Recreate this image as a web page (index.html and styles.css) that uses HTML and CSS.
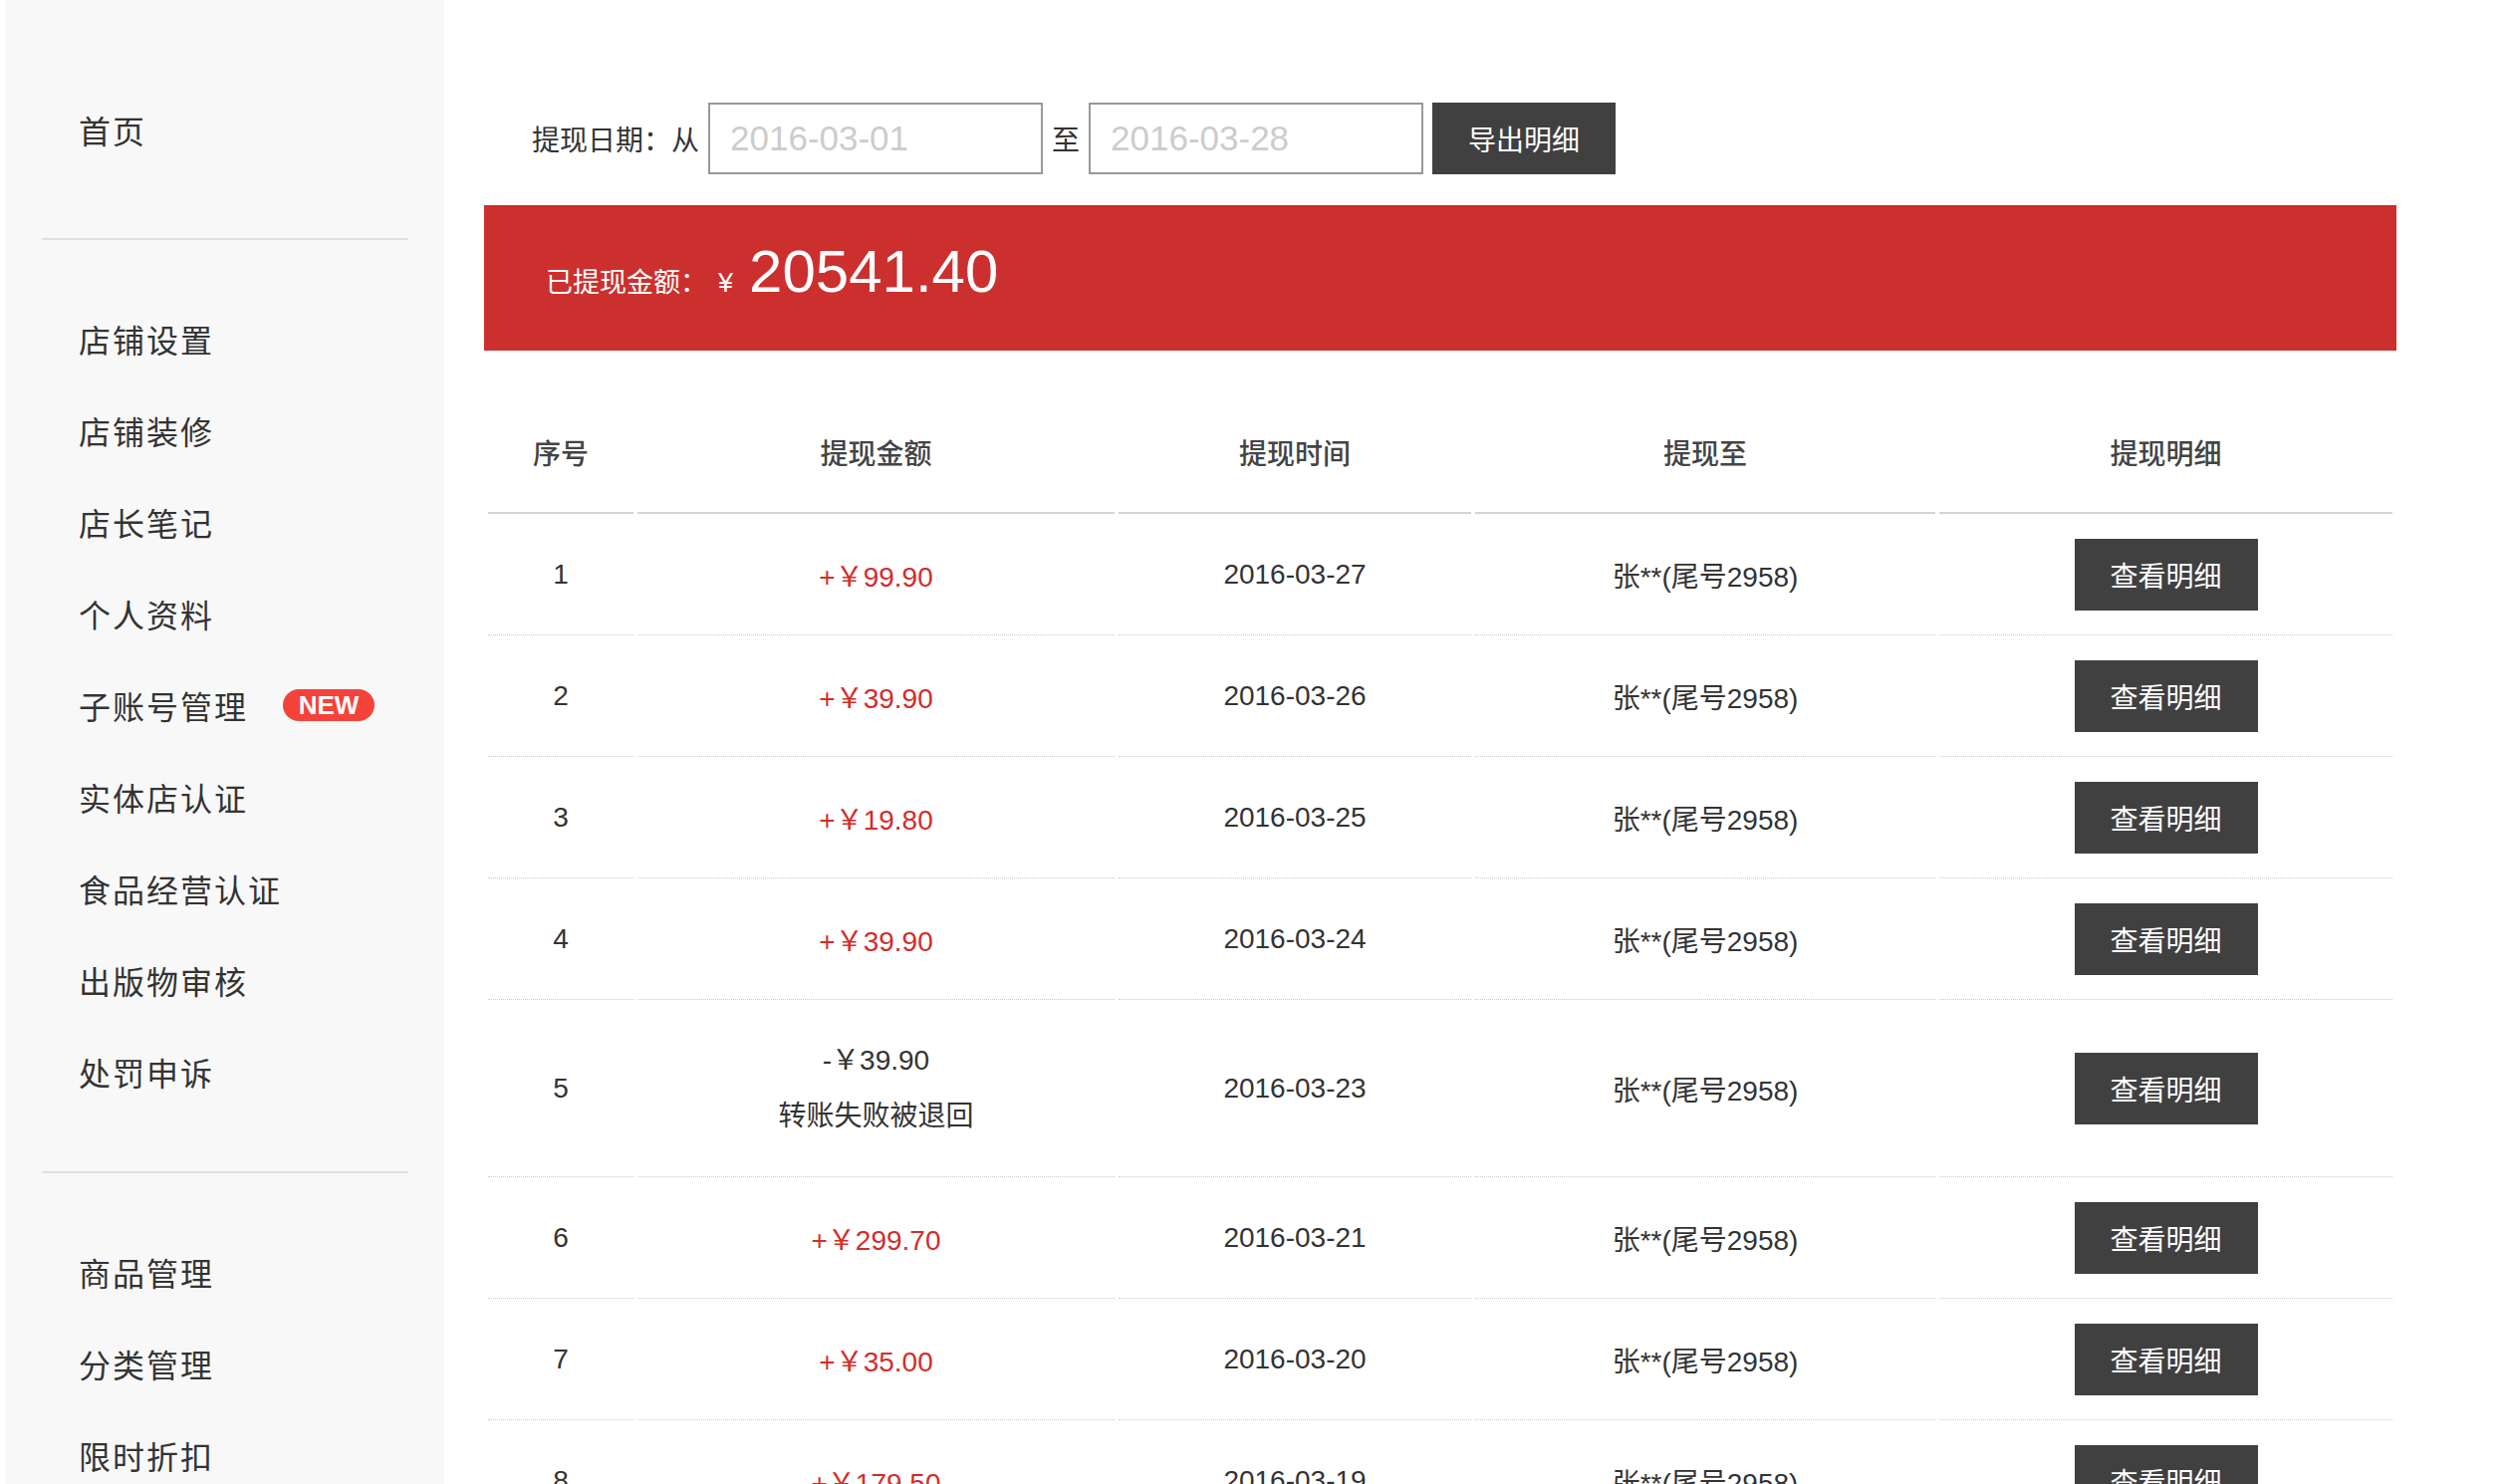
FILE: index.html
```html
<!DOCTYPE html>
<html lang="zh-CN">
<head>
<meta charset="utf-8">
<title>提现记录</title>
<link rel="stylesheet" href="styles.css">
</head>
<body>
<div class="page">
  <aside class="sidebar">
    <ul class="nav-group first">
      <li class="nav-item">首页</li>
    </ul>
    <div class="nav-divider"></div>
    <ul class="nav-group">
      <li class="nav-item">店铺设置</li>
      <li class="nav-item">店铺装修</li>
      <li class="nav-item">店长笔记</li>
      <li class="nav-item">个人资料</li>
      <li class="nav-item">子账号管理<span class="badge-new">NEW</span></li>
      <li class="nav-item">实体店认证</li>
      <li class="nav-item">食品经营认证</li>
      <li class="nav-item">出版物审核</li>
      <li class="nav-item">处罚申诉</li>
    </ul>
    <div class="nav-divider"></div>
    <ul class="nav-group">
      <li class="nav-item">商品管理</li>
      <li class="nav-item">分类管理</li>
      <li class="nav-item">限时折扣</li>
    </ul>
  </aside>

  <main class="main">
    <div class="filter">
      <span class="filter-label">提现日期：从</span>
      <input class="date-input" type="text" value="2016-03-01">
      <span class="filter-sep">至</span>
      <input class="date-input" type="text" value="2016-03-28">
      <button class="btn-dark btn-export">导出明细</button>
    </div>

    <div class="summary">
      <span class="summary-label">已提现金额：</span>
      <span class="summary-cur">¥</span>
      <span class="summary-total">20541.40</span>
    </div>

    <table class="records">
      <colgroup>
        <col class="c-no">
        <col class="c-amt">
        <col class="c-time">
        <col class="c-to">
        <col class="c-act">
      </colgroup>
      <thead>
        <tr>
          <th>序号</th>
          <th>提现金额</th>
          <th>提现时间</th>
          <th>提现至</th>
          <th>提现明细</th>
        </tr>
      </thead>
      <tbody>
        <tr>
          <td>1</td>
          <td class="amt-plus">+￥99.90</td>
          <td>2016-03-27</td>
          <td>张**(尾号2958)</td>
          <td><button class="btn-dark btn-view">查看明细</button></td>
        </tr>
        <tr>
          <td>2</td>
          <td class="amt-plus">+￥39.90</td>
          <td>2016-03-26</td>
          <td>张**(尾号2958)</td>
          <td><button class="btn-dark btn-view">查看明细</button></td>
        </tr>
        <tr>
          <td>3</td>
          <td class="amt-plus">+￥19.80</td>
          <td>2016-03-25</td>
          <td>张**(尾号2958)</td>
          <td><button class="btn-dark btn-view">查看明细</button></td>
        </tr>
        <tr>
          <td>4</td>
          <td class="amt-plus">+￥39.90</td>
          <td>2016-03-24</td>
          <td>张**(尾号2958)</td>
          <td><button class="btn-dark btn-view">查看明细</button></td>
        </tr>
        <tr>
          <td>5</td>
          <td><div class="amt-returned">-￥39.90<br>转账失败被退回</div></td>
          <td>2016-03-23</td>
          <td>张**(尾号2958)</td>
          <td><button class="btn-dark btn-view">查看明细</button></td>
        </tr>
        <tr>
          <td>6</td>
          <td class="amt-plus">+￥299.70</td>
          <td>2016-03-21</td>
          <td>张**(尾号2958)</td>
          <td><button class="btn-dark btn-view">查看明细</button></td>
        </tr>
        <tr>
          <td>7</td>
          <td class="amt-plus">+￥35.00</td>
          <td>2016-03-20</td>
          <td>张**(尾号2958)</td>
          <td><button class="btn-dark btn-view">查看明细</button></td>
        </tr>
        <tr>
          <td>8</td>
          <td class="amt-plus">+￥179.50</td>
          <td>2016-03-19</td>
          <td>张**(尾号2958)</td>
          <td><button class="btn-dark btn-view">查看明细</button></td>
        </tr>
      </tbody>
    </table>
  </main>
</div>
</body>
</html>
```

FILE: styles.css
```css
html, body {
  margin: 0;
  padding: 0;
  overflow: hidden;
  background: #ffffff;
}

body {
  font-family: "Liberation Sans", "Noto Sans CJK SC", sans-serif;
  color: #333333;
}

.page {
  display: flex;
  align-items: flex-start;
  height: 1490px;
}

/* ---------- Sidebar ---------- */
.sidebar {
  margin-left: 6px;
  width: 440px;
  min-height: 1560px;
  background: #f8f8f8;
  flex-shrink: 0;
}

.nav-group {
  list-style: none;
  margin: 0;
  padding: 53px 0 54px 0;
}

.nav-group.first {
  padding: 84px 0 63px 0;
}

.nav-item {
  height: 92px;
  line-height: 92px;
  padding-left: 73px;
  font-family: "Noto Sans CJK SC", sans-serif;
  font-size: 32px;
  letter-spacing: 2px;
  color: #333333;
  display: flex;
  align-items: center;
}

.nav-divider {
  height: 2px;
  margin: 0 36px;
  background: #e0e0e0;
}

.badge-new {
  margin-left: 35px;
  width: 92px;
  height: 32px;
  border-radius: 16px;
  background: #f4433a;
  color: #ffffff;
  font-family: "Liberation Sans", sans-serif;
  font-weight: bold;
  font-size: 26px;
  letter-spacing: 0;
  line-height: 32px;
  text-align: center;
}

/* ---------- Main ---------- */
.main {
  margin-left: 40px;
  width: 1920px;
  padding-top: 103px;
}

.filter {
  display: flex;
  align-items: center;
  gap: 9px;
  height: 72px;
}

.filter-label {
  margin-left: 48px;
  font-size: 28px;
  color: #333333;
}

.filter-sep {
  font-size: 28px;
  color: #333333;
}

.date-input {
  box-sizing: border-box;
  width: 336px;
  height: 72px;
  border: 2px solid #999999;
  padding: 0 0 0 20px;
  margin: 0;
  font-family: "Liberation Sans", sans-serif;
  font-size: 35px;
  color: #cccccc;
  background: #ffffff;
  outline: none;
}

.btn-dark {
  border: none;
  background: #404040;
  color: #ffffff;
  font-family: "Liberation Sans", "Noto Sans CJK SC", sans-serif;
  font-size: 28px;
  padding: 0;
  margin: 0;
  cursor: pointer;
}

.btn-export {
  width: 184px;
  height: 72px;
}

.summary {
  margin-top: 31px;
  height: 146px;
  box-sizing: border-box;
  padding: 32px 0 0 62px;
  background: #cc302e;
  color: #ffffff;
  display: flex;
  align-items: baseline;
}

.summary-label {
  font-size: 27px;
}

.summary-cur {
  margin-left: 11px;
  font-size: 27px;
}

.summary-total {
  margin-left: 16px;
  font-size: 60px;
}

/* ---------- Table ---------- */
.records {
  margin-top: 38px;
  width: 1920px;
  table-layout: fixed;
  border-collapse: separate;
  border-spacing: 4px 0;
}

.c-no { width: 146px; }
.c-amt { width: 479px; }
.c-time { width: 354px; }
.c-to { width: 462px; }
.c-act { width: 455px; }

.records th {
  padding: 49px 0 39px 0;
  line-height: 36px;
  font-size: 28px;
  font-weight: 500;
  color: #444444;
  text-align: center;
  border-bottom: 2px solid #d4d4d4;
}

.records td {
  height: 121px;
  padding: 0;
  text-align: center;
  vertical-align: middle;
  font-size: 28px;
  color: #333333;
  border-bottom: 1px dotted #cccccc;
}

.records td.amt-plus {
  color: #d22d2b;
}

.amt-returned {
  padding: 33px 0 32px 0;
  line-height: 56px;
  color: #333333;
}

.btn-view {
  width: 184px;
  height: 72px;
  vertical-align: middle;
}
```
